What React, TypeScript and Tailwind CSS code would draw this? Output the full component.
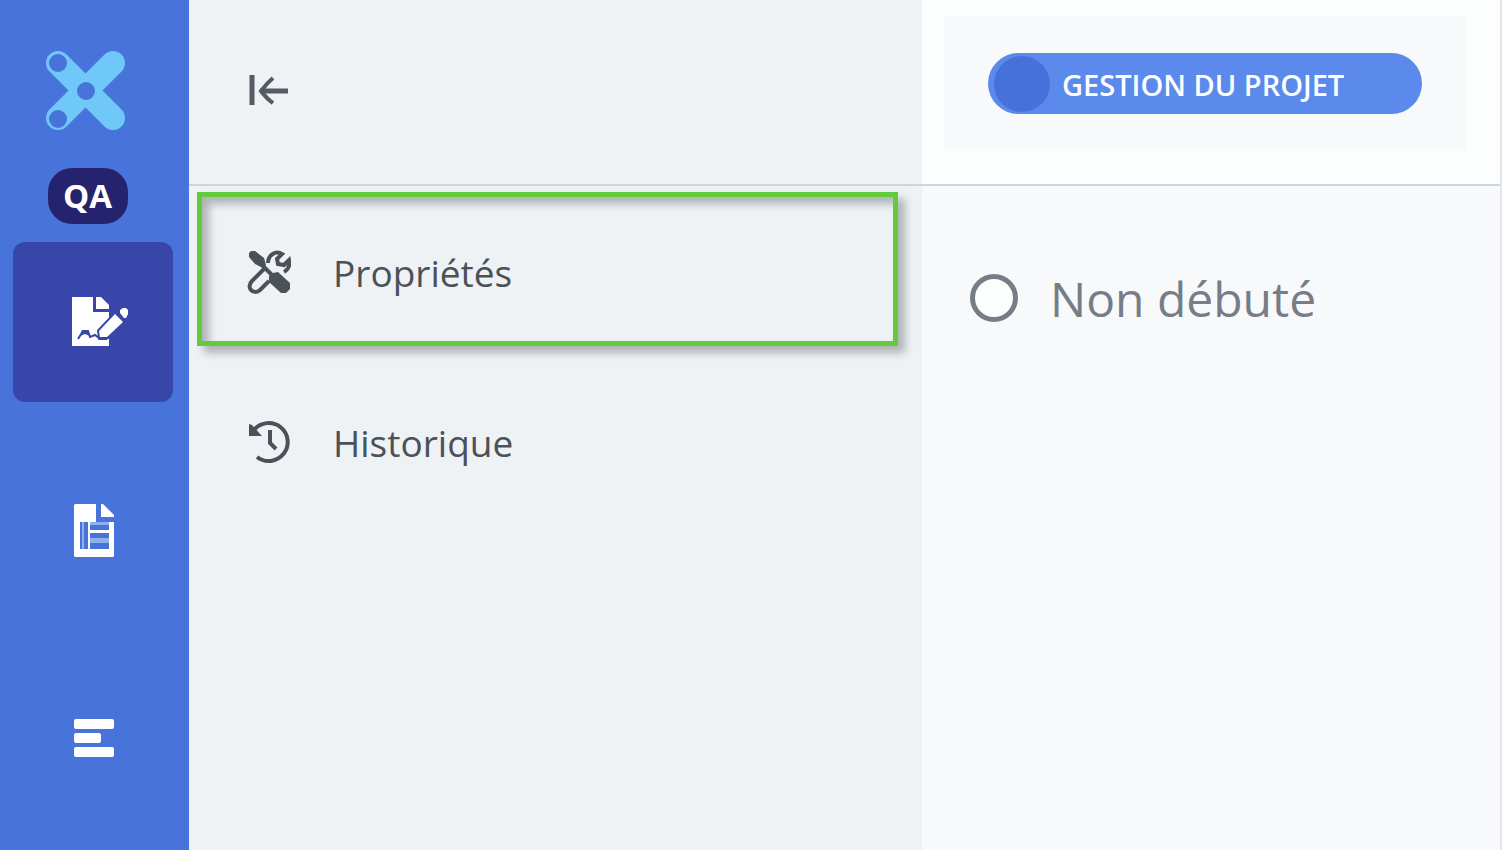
import React from "react";

const LogoIcon = () => (
  <svg
    viewBox="0 0 80 80"
    className="size-20 overflow-visible"
    aria-hidden="true"
  >
    <g stroke="#70c8f8" strokeWidth="24" strokeLinecap="round">
      <path d="M10 12L65 67" />
      <path d="M10 67L65 12" />
    </g>
    <g fill="#4773db">
      <circle cx="10" cy="12" r="9" />
      <circle cx="10" cy="68" r="9" />
      <circle cx="38" cy="40" r="9" />
    </g>
  </svg>
);

const SignatureIcon = () => (
  <svg viewBox="0 0 74 50" className="h-[50px] w-[74px]" aria-hidden="true">
    <g transform="translate(16 -1)">
      <path d="M0 0h21v16h16v34H0z" fill="#fff" />
      <path d="M24 0h4l9 9v4H24z" fill="#fff" />
      <path
        d="M43 18l8 8-17 16h-6l-1-7z"
        fill="#fff"
        stroke="#3746a8"
        strokeWidth="4"
      />
      <path d="M37 20h14v16H37z" fill="#3746a8" />
      <path d="M43 18l8 8-17 16h-6l-1-7z" fill="#fff" />
      <path d="M48 14l3-2h3l2 2v4l-2 4h-2l-4-5z" fill="#fff" />
      <path
        d="M6 43l5-8h5l2 6 5-2 4 3h12"
        fill="none"
        stroke="#3746a8"
        strokeWidth="2"
      />
      <path d="M10 34h6l2 6-5-2-5 2z" fill="#3746a8" />
    </g>
  </svg>
);

const DocumentIcon = () => (
  <svg viewBox="0 0 42 54" className="h-[54px] w-[42px]" aria-hidden="true">
    <path d="M2 2l1-1h21v18h18v34l-1 1H3l-1-1z" fill="#fff" />
    <path d="M29 1h2l11 11v2H29z" fill="#fff" />
    <path d="M8 19h8v27H8z" fill="#4773db" />
    <path d="M18 19h19v27H18z" fill="#4773db" />
    <path d="M18 19h19v3H18zM18 35h19v5H18zM10 19h2v27h-2z" fill="#8fb0ea" />
    <path d="M18 27h19v3H18z" fill="#fff" />
  </svg>
);

const BarsIcon = () => (
  <svg viewBox="0 0 42 40" className="h-10 w-[42px]" aria-hidden="true">
    <g fill="#fff">
      <rect x="2" y="1" width="40" height="10" rx="2" />
      <rect x="2" y="15" width="27" height="10" rx="2" />
      <rect x="2" y="29" width="40" height="10" rx="2" />
    </g>
  </svg>
);

const CollapseIcon = () => (
  <svg
    viewBox="0 0 42 32"
    className="h-8 w-[42px]"
    fill="none"
    stroke="#555b63"
    aria-hidden="true"
  >
    <path d="M5 1v30" strokeWidth="5" />
    <path d="M41 17H13" strokeWidth="5" />
    <path d="M26 4q-6 5-12 13q6 8 12 12" strokeWidth="4" />
  </svg>
);

const ToolsIcon = () => (
  <svg
    viewBox="0 0 44 44"
    className="size-11"
    fill="none"
    stroke="#4b5158"
    aria-hidden="true"
  >
    <path d="M2 3l2-2h4l9 7 2 7-3 3-8-4-6-7z" fill="#4b5158" stroke="none" />
    <path d="M14 14l12 12" strokeWidth="4" />
    <path
      d="M22 26l4-3 5-1 12 11v6l-4 4h-5L22 32z"
      fill="#4b5158"
      stroke="none"
    />
    <path
      d="M21 13c0-7 6-12 12-10l2 1-5 5 1 5 6 1 5-5c1 5 0 9-5 12"
      strokeWidth="4"
    />
    <path
      d="M17 19L5 31c-3 3-3 7-1 9s6 3 9 0l9-9"
      strokeWidth="4"
    />
  </svg>
);

const HistoryIcon = () => (
  <svg
    viewBox="0 0 44 44"
    className="size-11"
    fill="none"
    stroke="#4b5158"
    aria-hidden="true"
  >
    <path d="M7 10A19 19 0 1 1 10 37" strokeWidth="4" />
    <path d="M2 4l3 1 10 11H2z" fill="#4b5158" stroke="none" />
    <path d="M23 10v13l6 6" strokeWidth="4" />
  </svg>
);

const navItems = [
  { label: "Signature", icon: SignatureIcon, active: true },
  { label: "Document", icon: DocumentIcon, active: false },
  { label: "Planning", icon: BarsIcon, active: false },
];

const menuItems = [
  { label: "Propriétés", icon: ToolsIcon, selected: true },
  { label: "Historique", icon: HistoryIcon, selected: false },
];

const Sidebar: React.FC = () => (
  <aside className="w-[189px] shrink-0 bg-[#4773db] pt-[51px]">
    <div className="flex flex-col items-center pr-3.5">
      <LogoIcon />
      <span className="mt-[37px] flex h-14 w-20 items-center justify-center rounded-3xl bg-[#25226e] text-[33px] font-bold text-white">
        QA
      </span>
    </div>
    <nav className="mt-[18px] flex flex-col items-center gap-12 pr-[3px]">
      {navItems.map(({ label, icon: Icon, active }) => (
        <button
          key={label}
          aria-label={label}
          className={
            active
              ? "flex size-40 items-center justify-center rounded-xl bg-[#3746a8]"
              : "flex size-40 items-center justify-center rounded-xl"
          }
        >
          <Icon />
        </button>
      ))}
    </nav>
  </aside>
);

const SidePanel: React.FC = () => (
  <section className="w-[733px] shrink-0 bg-[#eef2f5]">
    <header className="flex h-[186px] items-center border-b-2 border-[#cfd5dd] pb-1 pl-[58px]">
      <button aria-label="Réduire">
        <CollapseIcon />
      </button>
    </header>
    <ul>
      {menuItems.map(({ label, icon: Icon, selected }) => (
        <li key={label} className="relative">
          <button className="flex h-[170px] w-full items-center gap-[42px] pt-0.5 pl-[58px] text-left text-[37px] text-[#4b5158]">
            <Icon />
            <span className="pt-0.5">{label}</span>
          </button>
          {selected && (
            <span className="pointer-events-none absolute top-1.5 right-6 bottom-2.5 left-2 border-5 border-[#60cc3c] shadow-[7px_7px_8px_rgba(0,0,0,0.26),inset_7px_7px_8px_rgba(0,0,0,0.26)]" />
          )}
        </li>
      ))}
    </ul>
  </section>
);

const ProjectStatus: React.FC = () => (
  <main className="min-w-0 flex-1 border-r-2 border-[#e4e5e8] bg-[#f8f9fb]">
    <header className="h-[186px] border-b-2 border-[#cfd5dd] bg-[#fcfdfd] pt-4 pr-[34px] pl-[22px]">
      <div className="bg-[#f8f9fb] px-11 pt-[37px] pb-[35px]">
        <button className="flex h-[61px] w-full items-center gap-3 rounded-full bg-[#5b8aec] pl-1.5 text-[29px] font-semibold whitespace-nowrap text-white">
          <span className="size-14 shrink-0 rounded-full bg-[#4671da]" />
          <span className="pt-0.5">GESTION DU PROJET</span>
        </button>
      </div>
    </header>
    <label className="flex items-center gap-8 pt-[79px] pl-12 text-[48px] leading-16 whitespace-nowrap text-[#777d87]">
      <input
        type="radio"
        name="status"
        className="size-12 shrink-0 appearance-none rounded-full border-5 border-[#777d87] bg-[#fcfdfd]"
      />
      <span className="pt-0.5">Non débuté</span>
    </label>
  </main>
);

const App: React.FC = () => {
  return (
    <div className="flex min-h-screen font-['Open_Sans',sans-serif]">
      <Sidebar />
      <SidePanel />
      <ProjectStatus />
    </div>
  );
};

export default App;
